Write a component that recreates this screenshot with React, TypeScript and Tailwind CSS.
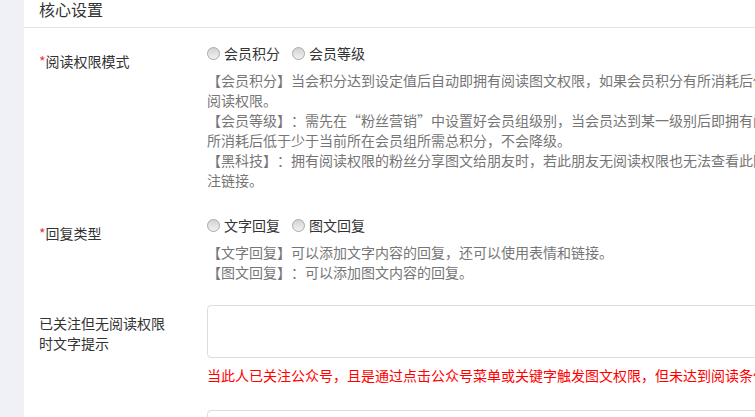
const font = { fontFamily: '"Noto Sans CJK SC", "Noto Sans", sans-serif' };

function Radio({ label }: { label: string }) {
    return (
        <label className="flex items-center h-[20px] text-[14px] text-[#333] mr-[12px]">
            <span className="w-[13px] h-[13px] rounded-full border border-[#a8a8a8] bg-gradient-to-b from-[#d2d2d2] to-[#f2f2f2] mr-[4px]" />
            <span>{label}</span>
        </label>
    );
}

function Label({ text, required }: { text: string; required?: boolean }) {
    return (
        <div className="w-[130px] shrink-0 pt-[8px] text-[14px] leading-[20px] text-[#333]">
            {required && <span className="text-[#f0353a]">*</span>}
            {text}
        </div>
    );
}

function Help({ lines }: { lines: string[] }) {
    return (
        <div className="mt-[7px] text-[14px] leading-[20px] text-[#767676]">
            {lines.map((l, i) => (
                <div key={i} className="whitespace-nowrap">{l}</div>
            ))}
        </div>
    );
}

export default function App() {
    return (
        <div className="w-[755px] h-[417px] overflow-hidden flex bg-white [text-spacing-trim:space-all]" style={font}>
            <div className="w-[24px] shrink-0 bg-[#eff1f6]" />
            <div className="flex-1 min-w-0">
                <div className="h-[28px] border-b border-[#e3e3e3] pl-[15px] pt-[1px] text-[16px] leading-[17px] text-[#333]">核心设置</div>

                <div className="pl-[15px] pt-[15px]">
                    <div className="flex">
                        <Label text="阅读权限模式" required />
                        <div className="ml-[38px] min-w-0">
                            <div className="flex">
                                <Radio label="会员积分" />
                                <Radio label="会员等级" />
                            </div>
                            <Help
                                lines={[
                                    '【会员积分】当会积分达到设定值后自动即拥有阅读图文权限，如果会员积分有所消耗后低于设定值，将失去',
                                    '阅读权限。',
                                    '【会员等级】：需先在“粉丝营销”中设置好会员组级别，当会员达到某一级别后即拥有阅读图文权限，如果会员积分有',
                                    '所消耗后低于少于当前所在会员组所需总积分，不会降级。',
                                    '【黑科技】：拥有阅读权限的粉丝分享图文给朋友时，若此朋友无阅读权限也无法查看此图文，并会提示其关',
                                    '注链接。',
                                ]}
                            />
                        </div>
                    </div>

                    <div className="flex mt-[25px]">
                        <Label text="回复类型" required />
                        <div className="ml-[38px] min-w-0">
                            <div className="flex">
                                <Radio label="文字回复" />
                                <Radio label="图文回复" />
                            </div>
                            <Help
                                lines={[
                                    '【文字回复】可以添加文字内容的回复，还可以使用表情和链接。',
                                    '【图文回复】：可以添加图文内容的回复。',
                                ]}
                            />
                        </div>
                    </div>

                    <div className="flex mt-[23px]">
                        <Label text="已关注但无阅读权限时文字提示" />
                        <div className="ml-[38px] w-[640px] shrink-0">
                            <div className="h-[53px] border border-[#dddddd] rounded-[4px]" />
                            <div className="mt-[7px] text-[14px] leading-[20px] text-[#ff0000] whitespace-nowrap">
                                当此人已关注公众号，且是通过点击公众号菜单或关键字触发图文权限，但未达到阅读条件时显示的文字提示
                            </div>
                        </div>
                    </div>

                    <div className="flex mt-[25px]">
                        <div className="w-[130px] shrink-0" />
                        <div className="ml-[38px] w-[640px] shrink-0">
                            <div className="h-[53px] border border-[#dddddd] rounded-[4px]" />
                        </div>
                    </div>
                </div>
            </div>
        </div>
    );
}
